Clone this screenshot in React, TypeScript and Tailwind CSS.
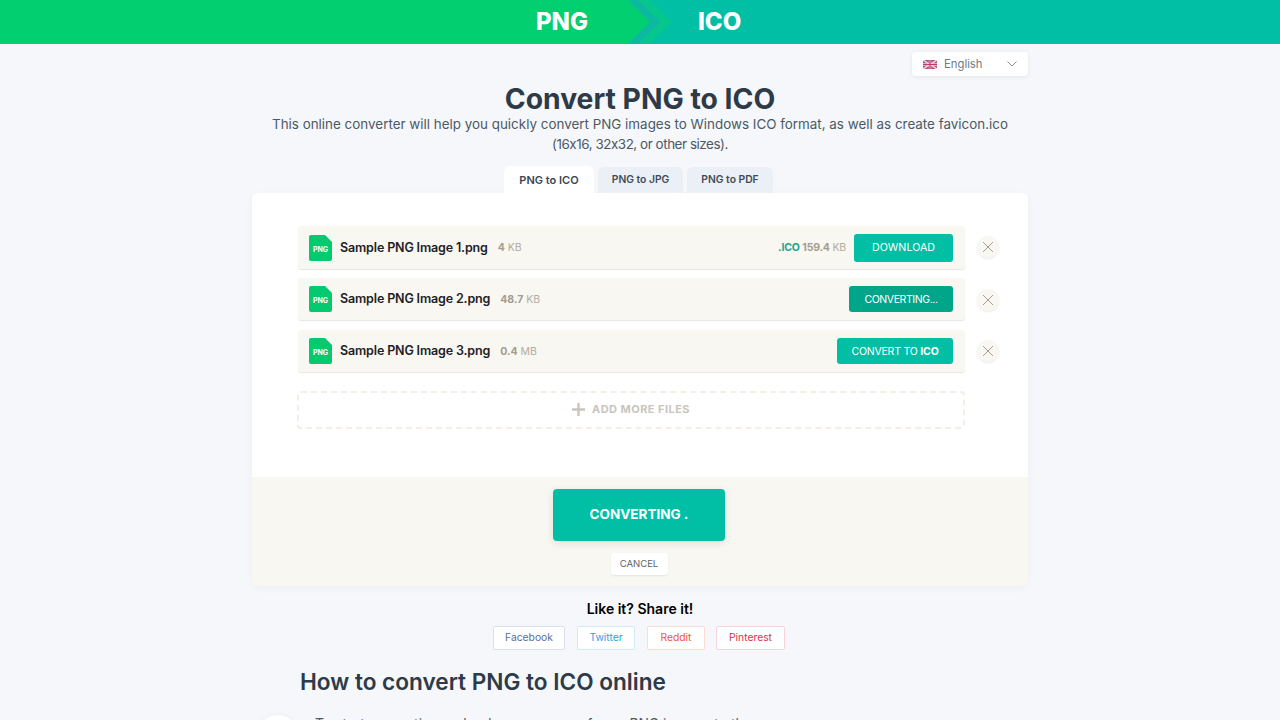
import React from "react";

function FileIcon() {
  return (
    <div className="relative w-[23px] h-[26px] shrink-0">
      <svg width="23" height="26" viewBox="0 0 23 26" className="block">
        <path d="M2 0H16L23 7V24a2 2 0 0 1-2 2H2a2 2 0 0 1-2-2V2a2 2 0 0 1 2-2Z" fill="#05c96f" />
      </svg>
      <span className="absolute left-0 right-0 top-[10px] text-center text-[7px] leading-[9px] font-bold text-white">PNG</span>
    </div>
  );
}

function CloseBtn({ cls }: { cls: string }) {
  return (
    <button className={`w-[22px] h-[22px] rounded-full bg-[#f9f7f2] shadow-[0_1px_2px_rgba(0,0,0,0.08)] flex items-center justify-center shrink-0 ${cls}`}>
      <svg width="12" height="12" viewBox="0 0 12 12" fill="none" stroke="#a89f90" strokeWidth="1">
        <path d="M1 1L11 11M11 1L1 11" />
      </svg>
    </button>
  );
}

function Row({ name, size, unit, h, mt, closeCls, children }: { name: string; size: string; unit: string; h: string; mt: string; closeCls: string; children: React.ReactNode }) {
  return (
    <div className={`flex items-center gap-[12px] ${mt}`}>
      <div className={`flex-1 ${h} flex items-center bg-[#f9f7f2] rounded-[3px] shadow-[0_1px_1px_rgba(0,0,0,0.1)] pl-[11px] pr-[12px]`}>
        <FileIcon />
        <span className="ml-[8px] pt-[1px] text-[12.5px] font-semibold text-[#1d2126] tracking-[-0.15px]">{name}</span>
        <span className="ml-[10px] pt-[1px] text-[10.5px] text-[#b3aca0]"><b className="text-[#a49c8e]">{size}</b> {unit}</span>
        <div className="flex-1" />
        {children}
      </div>
      <CloseBtn cls={closeCls} />
    </div>
  );
}

function Share({ label, cls }: { label: string; cls: string }) {
  return <button className={`h-[24px] rounded-[2px] border bg-white text-[10.3px] ${cls}`}>{label}</button>;
}

export default function App() {
  return (
    <div className="h-[720px] overflow-hidden bg-[#f5f7fb] font-['Inter','Liberation_Sans',sans-serif] [font-feature-settings:'calt'_0] text-[#2c3a47]">
      <header className="relative h-[44px] flex bg-[#00bfa5] text-white font-extrabold text-[24px]">
        <div className="w-[628px] bg-[#02cf6f] flex items-center justify-end pr-[40px]">PNG</div>
        <div className="flex-1 flex items-center pl-[70px]">ICO</div>
        <svg className="absolute left-[628px] top-0" width="46" height="44" viewBox="0 0 46 44">
          <polygon points="0,0 10,0 32,22 10,44 0,44 22,22" fill="#0cb9a0" />
          <polygon points="0,0 22,22 0,44" fill="#02cf6f" />
          <polygon points="10,0 22,0 44,22 22,44 10,44 32,22" fill="#05c68c" />
        </svg>
      </header>

      <div className="w-[776px] mx-auto">
        <div className="flex justify-end pt-[8px]">
          <div className="w-[116px] h-[24px] bg-white rounded-[4px] shadow-[0_1px_4px_rgba(0,0,0,0.08)] flex items-center pl-[11px] pr-[11px] text-[11.3px] text-[#6f7a86]">
            <svg width="14" height="9" viewBox="0 0 14 9" className="mr-[7px]">
              <rect width="14" height="9" rx="1" fill="#c0486e" />
              <path d="M0 0L14 9M14 0L0 9" stroke="#dcd3e6" strokeWidth="1.6" />
              <path d="M7 0V9M0 4.5H14" stroke="#dcd3e6" strokeWidth="2.4" />
              <path d="M7 0V9M0 4.5H14" stroke="#c23a62" strokeWidth="1.2" />
            </svg>
            <span>English</span>
            <div className="flex-1" />
            <svg width="10" height="6" viewBox="0 0 10 6" fill="none" stroke="#8a929b" strokeWidth="1"><path d="M0.5 0.5L5 5L9.5 0.5" /></svg>
          </div>
        </div>

        <h1 className="mt-[4px] text-center text-[28.3px] leading-[38px] font-bold text-[#2d3a47]">Convert PNG to ICO</h1>
        <p className="text-center text-[13.42px] leading-[20px] text-[#4c5964] mt-[-4px]">
          This online converter will help you quickly convert PNG images to Windows ICO format, as well as create favicon.ico<br />
          <span className="tracking-[-0.45px]">(16x16, 32x32, or other sizes).</span>
        </p>

        <div className="flex justify-center gap-[4px] mt-[12px] h-[27px] items-end pr-[3px]">
          <div className="w-[90px] h-[27px] pt-[2px] bg-white rounded-t-[6px] flex items-center justify-center text-[11px] font-semibold text-[#3a4652]">PNG to ICO</div>
          <div className="w-[85px] h-[26px] pb-[1px] bg-[#ebeff6] rounded-t-[6px] flex items-center justify-center text-[10.3px] font-semibold text-[#3f4b58]">PNG to JPG</div>
          <div className="w-[86px] h-[26px] pb-[1px] bg-[#ebeff6] rounded-t-[6px] flex items-center justify-center text-[10.3px] font-semibold text-[#3f4b58]">PNG to PDF</div>
        </div>

        <section className="h-[393px] bg-white rounded-[6px] shadow-[0_2px_8px_rgba(0,0,0,0.04)] overflow-hidden flex flex-col">
          <div className="flex-1 pt-[33px] pl-[46px] pr-[29px]">
            <Row name="Sample PNG Image 1.png" size="4" unit="KB" h="h-[43px]" mt="" closeCls="mb-[1px]">
              <span className="pt-[1px] text-[10.5px] tracking-[-0.2px] text-[#b3aca0] mr-[8px]"><b className="text-[#1ba88c]">.ICO</b> <b className="text-[#a49c8e]">159.4</b> KB</span>
              <button className="w-[99px] h-[28px] pt-[1px] rounded-[3px] bg-[#00bfa5] text-white text-[10.7px]">DOWNLOAD</button>
            </Row>
            <Row name="Sample PNG Image 2.png" size="48.7" unit="KB" h="h-[42px]" mt="mt-[9px]" closeCls="mt-[1px]">
              <button className="w-[104px] h-[26px] pt-[1px] rounded-[3px] bg-[#00a58a] text-white text-[10.5px] tracking-[-0.4px]">CONVERTING...</button>
            </Row>
            <Row name="Sample PNG Image 3.png" size="0.4" unit="MB" h="h-[42px]" mt="mt-[10px]" closeCls="">
              <button className="w-[116px] h-[26px] pt-[1px] rounded-[3px] bg-[#00bfa5] text-white text-[10.5px] tracking-[-0.2px]">CONVERT TO <b>ICO</b></button>
            </Row>
            <div className="mt-[19px] ml-[-1px] mr-[34px] h-[38px] pb-[1px] rounded-[4px] border-2 border-dashed border-[#f3efe6] flex items-center justify-center text-[11px] font-bold text-[#c9c5bd] tracking-[0.45px]">
              <svg width="13" height="13" viewBox="0 0 13 13" className="mr-[7px]" fill="none" stroke="#c9c5bd" strokeWidth="2.4"><path d="M6.5 0V13M0 6.5H13" /></svg>
              ADD MORE FILES
            </div>
          </div>
          <div className="h-[109px] bg-[#f9f7f2] flex flex-col items-center pt-[12px] pr-[2px]">
            <button className="w-[172px] h-[52px] pb-[2px] rounded-[4px] bg-[#00bfa5] text-white text-[13.5px] font-bold shadow-[0_2px_8px_rgba(0,0,0,0.1)]">CONVERTING .</button>
            <button className="mt-[12px] w-[57px] h-[22px] rounded-[3px] bg-white text-[9.5px] text-[#5b646d] shadow-[0_1px_2px_rgba(0,0,0,0.08)]">CANCEL</button>
          </div>
        </section>

        <div className="mt-[14px] text-center text-[14px] leading-[18px] font-semibold text-black">Like it? Share it!</div>
        <div className="mt-[8px] flex justify-center gap-[12px] pr-[2px]">
          <Share label="Facebook" cls="w-[72px] border-[#d9e1ee] text-[#5b7094]" />
          <Share label="Twitter" cls="w-[58px] border-[#cfeaf8] text-[#2ea3dc]" />
          <Share label="Reddit" cls="w-[58px] border-[#fbdcd3] text-[#f0583a]" />
          <Share label="Pinterest" cls="w-[69px] ml-[-1px] border-[#f8d3da] text-[#d9334f]" />
        </div>

        <h2 className="mt-[18px] ml-[48px] text-[22.6px] leading-[28px] font-semibold text-[#2d3a47]">How to convert PNG to ICO online</h2>
        <div className="relative mt-[18px] ml-[63px]">
          <span className="block text-[13.9px] leading-[20px] text-[#4c5964]">To start converting, upload one or more of your PNG images to the</span>
          <div className="absolute left-[-57px] top-[1px] w-[40px] h-[40px] rounded-full bg-white shadow-[0_0_8px_rgba(0,0,0,0.04)]" />
        </div>
      </div>
    </div>
  );
}
